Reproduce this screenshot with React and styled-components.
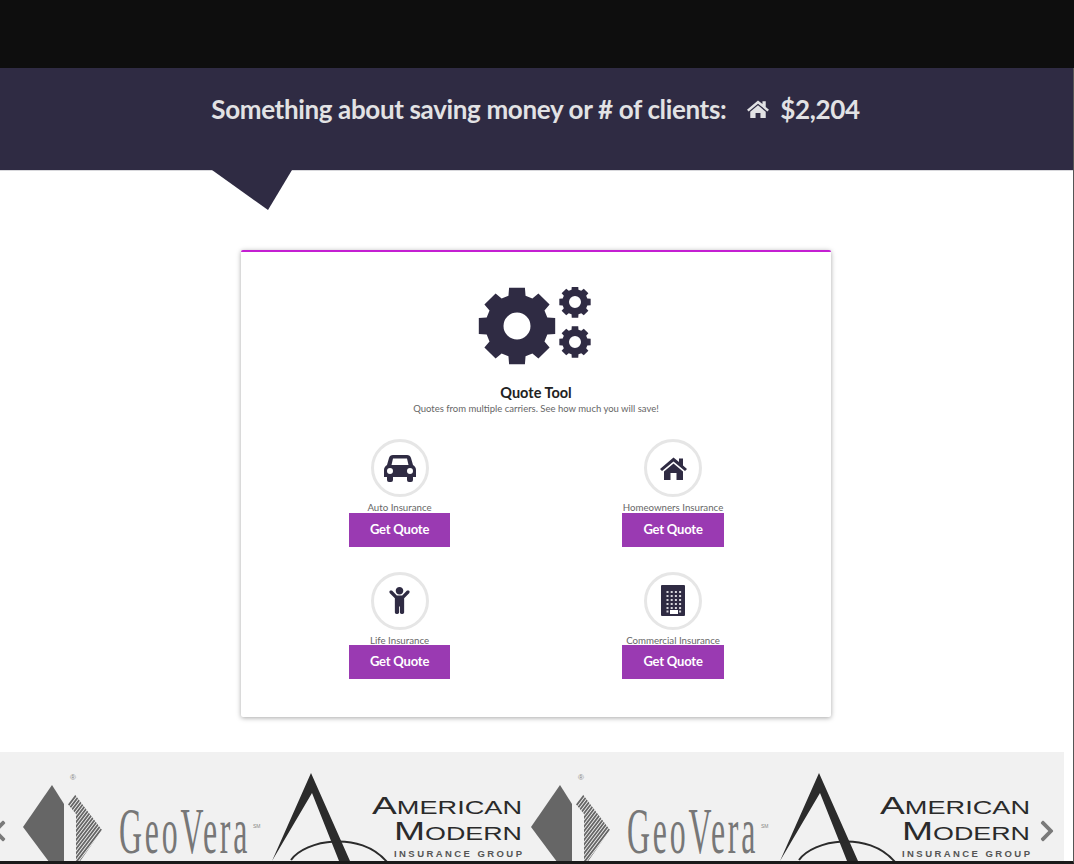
import styled, { createGlobalStyle } from "styled-components";
import { FaChild, FaChevronLeft, FaChevronRight } from "react-icons/fa";

const GlobalStyle = createGlobalStyle`
  html, body {
    margin: 0;
    padding: 0;
    background: #fff;
  }
  * {
    box-sizing: border-box;
  }
`;

const Page = styled.div`
  width: 1074px;
  height: 864px;
  overflow: hidden;
  display: flex;
  flex-direction: column;
  font-family: Lato, "Open Sans", sans-serif;
  background: #0e0e0e;
`;

const TopBar = styled.div`
  height: 68px;
  flex: none;
  background: #0e0e0e;
`;

const Body = styled.div`
  flex: 1;
  min-height: 0;
  background: #fff;
  border-right: 1px solid #555;
  border-bottom: 3px solid #1a1a1a;
  display: flex;
  flex-direction: column;
`;

const Banner = styled.header`
  position: relative;
  height: 103px;
  flex: none;
  background: #2f2b43;
  border-bottom: 1px solid #d8d8dc;
  display: flex;
  justify-content: center;
  align-items: flex-start;
  gap: 21px;
  padding: 23px 2px 0 0;
  font-size: 26px;
  line-height: 36px;
  font-weight: 700;
  letter-spacing: -0.35px;
  color: #e2e2e4;
`;

const Pointer = styled.div`
  position: absolute;
  top: 102px;
  left: 212px;
  width: 80px;
  height: 40px;
  background: #2f2b43;
  clip-path: polygon(0 0, 100% 0, 70% 100%);
`;

const Savings = styled.span`
  display: flex;
  align-items: center;
  gap: 11px;
`;

const Main = styled.main`
  flex: 1;
  display: flex;
  justify-content: center;
  padding: 79px 1px 0 0;
`;

const Card = styled.section`
  width: 590px;
  height: 467px;
  background: #fff;
  border-top: 2px solid #c41fd2;
  border-radius: 2px;
  box-shadow: 0 1px 5px rgba(0, 0, 0, 0.35);
  display: flex;
  flex-direction: column;
  align-items: center;
  padding-top: 35px;
`;

const Gears = styled.svg`
  display: block;
  width: 116px;
  height: 80px;
  color: #2f2b43;
`;

const CardTitle = styled.h2`
  margin: 17px 0 0;
  font-size: 14.5px;
  line-height: 18px;
  font-weight: 700;
  color: #222;
`;

const CardText = styled.p`
  margin: 1px 0 -1px;
  font-size: 9.5px;
  line-height: 12px;
  color: #666;
`;

const Options = styled.div`
  margin: 25px 0 0 1px;
  display: grid;
  grid-template-columns: 101px 102px;
  column-gap: 172px;
  row-gap: 25px;
`;

const Option = styled.div`
  display: flex;
  flex-direction: column;
  align-items: center;
`;

const Circle = styled.div`
  width: 58px;
  height: 58px;
  border: 3px solid #e6e6e6;
  border-radius: 50%;
  display: flex;
  align-items: center;
  justify-content: center;
  color: #2f2b43;
`;

const OptionLabel = styled.div`
  margin-top: 4px;
  height: 11.6px;
  font-size: 9.7px;
  line-height: 12px;
  color: #666;
  white-space: nowrap;
`;

const QuoteButton = styled.button`
  width: 100%;
  height: 34px;
  border: 0;
  padding: 0 0 2px;
  background: #9a3ab2;
  color: #fff;
  font-family: inherit;
  font-size: 13px;
  font-weight: 700;
  letter-spacing: -0.2px;
`;

const Carousel = styled.div`
  position: relative;
  flex: none;
  width: 1064px;
  height: 109px;
  background: #f1f1f1;
  overflow: hidden;
  display: flex;
`;

const Slide = styled.svg`
  display: block;
  flex: none;
  width: 508px;
  height: 109px;
  overflow: visible;
`;

const Arrow = styled.div`
  position: absolute;
  top: 67px;
  ${(p) => (p.$side === "left" ? "left: -13px;" : "right: 5px;")}
  display: flex;
  color: #7a7a7a;
  font-size: 24px;
`;

function CarIcon() {
  return (
    <svg width="32" height="27" viewBox="0 0 32 27" fill="currentColor">
      <path
        fillRule="evenodd"
        d="M9 0H23C25 0 26.5 1 27 3L29 10C31 11 32 13 32 15V22H29V25a2 2 0 0 1-2 2H25a2 2 0 0 1-2-2V22H9V25a2 2 0 0 1-2 2H5a2 2 0 0 1-2-2V22H0V15C0 13 1 11 3 10L5 3C5.5 1 7 0 9 0ZM9 3.5L7.5 10H24.5L23 3.5ZM6 13a3 3 0 1 0 0 6a3 3 0 1 0 0-6ZM26 13a3 3 0 1 0 0 6a3 3 0 1 0 0-6Z"
      />
    </svg>
  );
}

function HomeIcon({ width = 27 }) {
  return (
    <svg width={width} viewBox="0 0 27 23" fill="currentColor">
      <path d="M0 12L13.5 0.5L19 5V1.5H23V8.5L27 12L25 14L13.5 4.5L2 14Z" />
      <path d="M4 14.5L13.5 6.5L23 14.5V23H16.5V16H10.5V23H4Z" />
    </svg>
  );
}

function BuildingIcon() {
  const dots = [];
  [6, 10, 14, 18, 22].forEach((y) => {
    [5.5, 9.7, 13.9, 18.1].forEach((x) => {
      dots.push(<rect key={`${x}-${y}`} x={x} y={y} width="2" height="2" fill="#d5d4da" />);
    });
  });
  return (
    <svg width="24" height="31" viewBox="0 0 24 31" fill="currentColor">
      <rect width="24" height="31" rx="1" />
      {dots}
      <rect x="5.5" y="25.5" width="2" height="2" fill="#d5d4da" />
      <rect x="18.1" y="25.5" width="2" height="2" fill="#d5d4da" />
      <rect x="9" y="25" width="8" height="4" fill="#fff" />
    </svg>
  );
}

const options = [
  { label: "Auto Insurance", icon: <CarIcon /> },
  { label: "Homeowners Insurance", icon: <HomeIcon /> },
  { label: "Life Insurance", icon: <FaChild size={27} /> },
  { label: "Commercial Insurance", icon: <BuildingIcon /> },
];

// builds a toothed wheel with a round hole, all numbers in svg units
function gearPath(cx, cy, outer, inner, hole, teeth) {
  const step = (Math.PI * 2) / teeth;
  let d = "";
  for (let i = 0; i < teeth; i++) {
    const a = i * step - Math.PI / 2;
    const pts = [
      [inner, a - step * 0.35],
      [outer, a - step * 0.26],
      [outer, a + step * 0.26],
      [inner, a + step * 0.35],
    ];
    pts.forEach(([r, t], j) => {
      const x = (cx + r * Math.cos(t)).toFixed(2);
      const y = (cy + r * Math.sin(t)).toFixed(2);
      d += `${i === 0 && j === 0 ? "M" : "L"}${x} ${y} `;
    });
  }
  d += `Z M${cx - hole} ${cy} a${hole} ${hole} 0 1 0 ${hole * 2} 0 a${hole} ${hole} 0 1 0 ${-hole * 2} 0 Z`;
  return d;
}

const hatchLines = Array.from({ length: 44 }, (_, i) => `M${10 + i * 3.4} 130l90 -118`).join(" ");

function LogoSlide({ id }) {
  const sans = '"Liberation Sans", sans-serif';
  return (
    <Slide viewBox="0 0 508 109">
      <defs>
        <clipPath id={id}>
          <path d="M50 35L60 23L102 78L76 115V62L62 45Z" />
        </clipPath>
      </defs>
      <path d="M23 75L52 33L64 52V130Z" fill="#666" />
      <g clipPath={`url(#${id})`}>
        <path d={hatchLines} stroke="#666" strokeWidth="1.8" fill="none" />
      </g>
      <text x="70" y="28" fontFamily={sans} fontSize="8" fill="#888">®</text>
      <text transform="translate(119 101) scale(0.49 1)" fontFamily='"Liberation Serif", serif' fontSize="65" letterSpacing="5.8" fill="#777">GeoVera</text>
      <text x="253" y="76" fontFamily={sans} fontSize="5" fill="#888">SM</text>
      <text x="119" y="115" fontFamily={sans} fontSize="9" fill="#888" textLength="129">INSURANCE</text>
      <path d="M311 21L272 109L312 41L339 109H350Z" fill="#2b2b2b" />
      <path d="M291 108C305 88 360 78 387 110" fill="none" stroke="#2b2b2b" strokeWidth="2" />
      <text x="372" y="62" fontFamily={sans} fill="#2b2b2b" textLength="150" lengthAdjust="spacingAndGlyphs">
        <tspan fontSize="24">A</tspan>
        <tspan fontSize="17.5">MERICAN</tspan>
      </text>
      <text x="394" y="88" fontFamily={sans} fill="#2b2b2b" textLength="128" lengthAdjust="spacingAndGlyphs">
        <tspan fontSize="25">M</tspan>
        <tspan fontSize="18">ODERN</tspan>
      </text>
      <text x="394" y="105" fontFamily={sans} fontSize="9.5" fontWeight="700" fill="#555" textLength="128">INSURANCE GROUP</text>
    </Slide>
  );
}

export default function App() {
  return (
    <Page>
      <GlobalStyle />
      <TopBar />
      <Body>
        <Banner>
          <span>Something about saving money or # of clients:</span>
          <Savings>
            <HomeIcon width={22} />
            $2,204
          </Savings>
          <Pointer />
        </Banner>
        <Main>
          <Card>
            <Gears viewBox="0 0 116 80">
              <path fill="currentColor" fillRule="evenodd" d={gearPath(39, 39, 39, 31.5, 13.5, 8)} />
              <path fill="currentColor" fillRule="evenodd" d={gearPath(97, 15, 16, 12.8, 6, 8)} />
              <path fill="currentColor" fillRule="evenodd" d={gearPath(97, 55, 16, 12.8, 6, 8)} />
            </Gears>
            <CardTitle>Quote Tool</CardTitle>
            <CardText>Quotes from multiple carriers. See how much you will save!</CardText>
            <Options>
              {options.map((o) => (
                <Option key={o.label}>
                  <Circle>{o.icon}</Circle>
                  <OptionLabel>{o.label}</OptionLabel>
                  <QuoteButton>Get Quote</QuoteButton>
                </Option>
              ))}
            </Options>
          </Card>
        </Main>
        <Carousel>
          <LogoSlide id="hatch-a" />
          <LogoSlide id="hatch-b" />
          <Arrow $side="left"><FaChevronLeft /></Arrow>
          <Arrow $side="right"><FaChevronRight /></Arrow>
        </Carousel>
      </Body>
    </Page>
  );
}
